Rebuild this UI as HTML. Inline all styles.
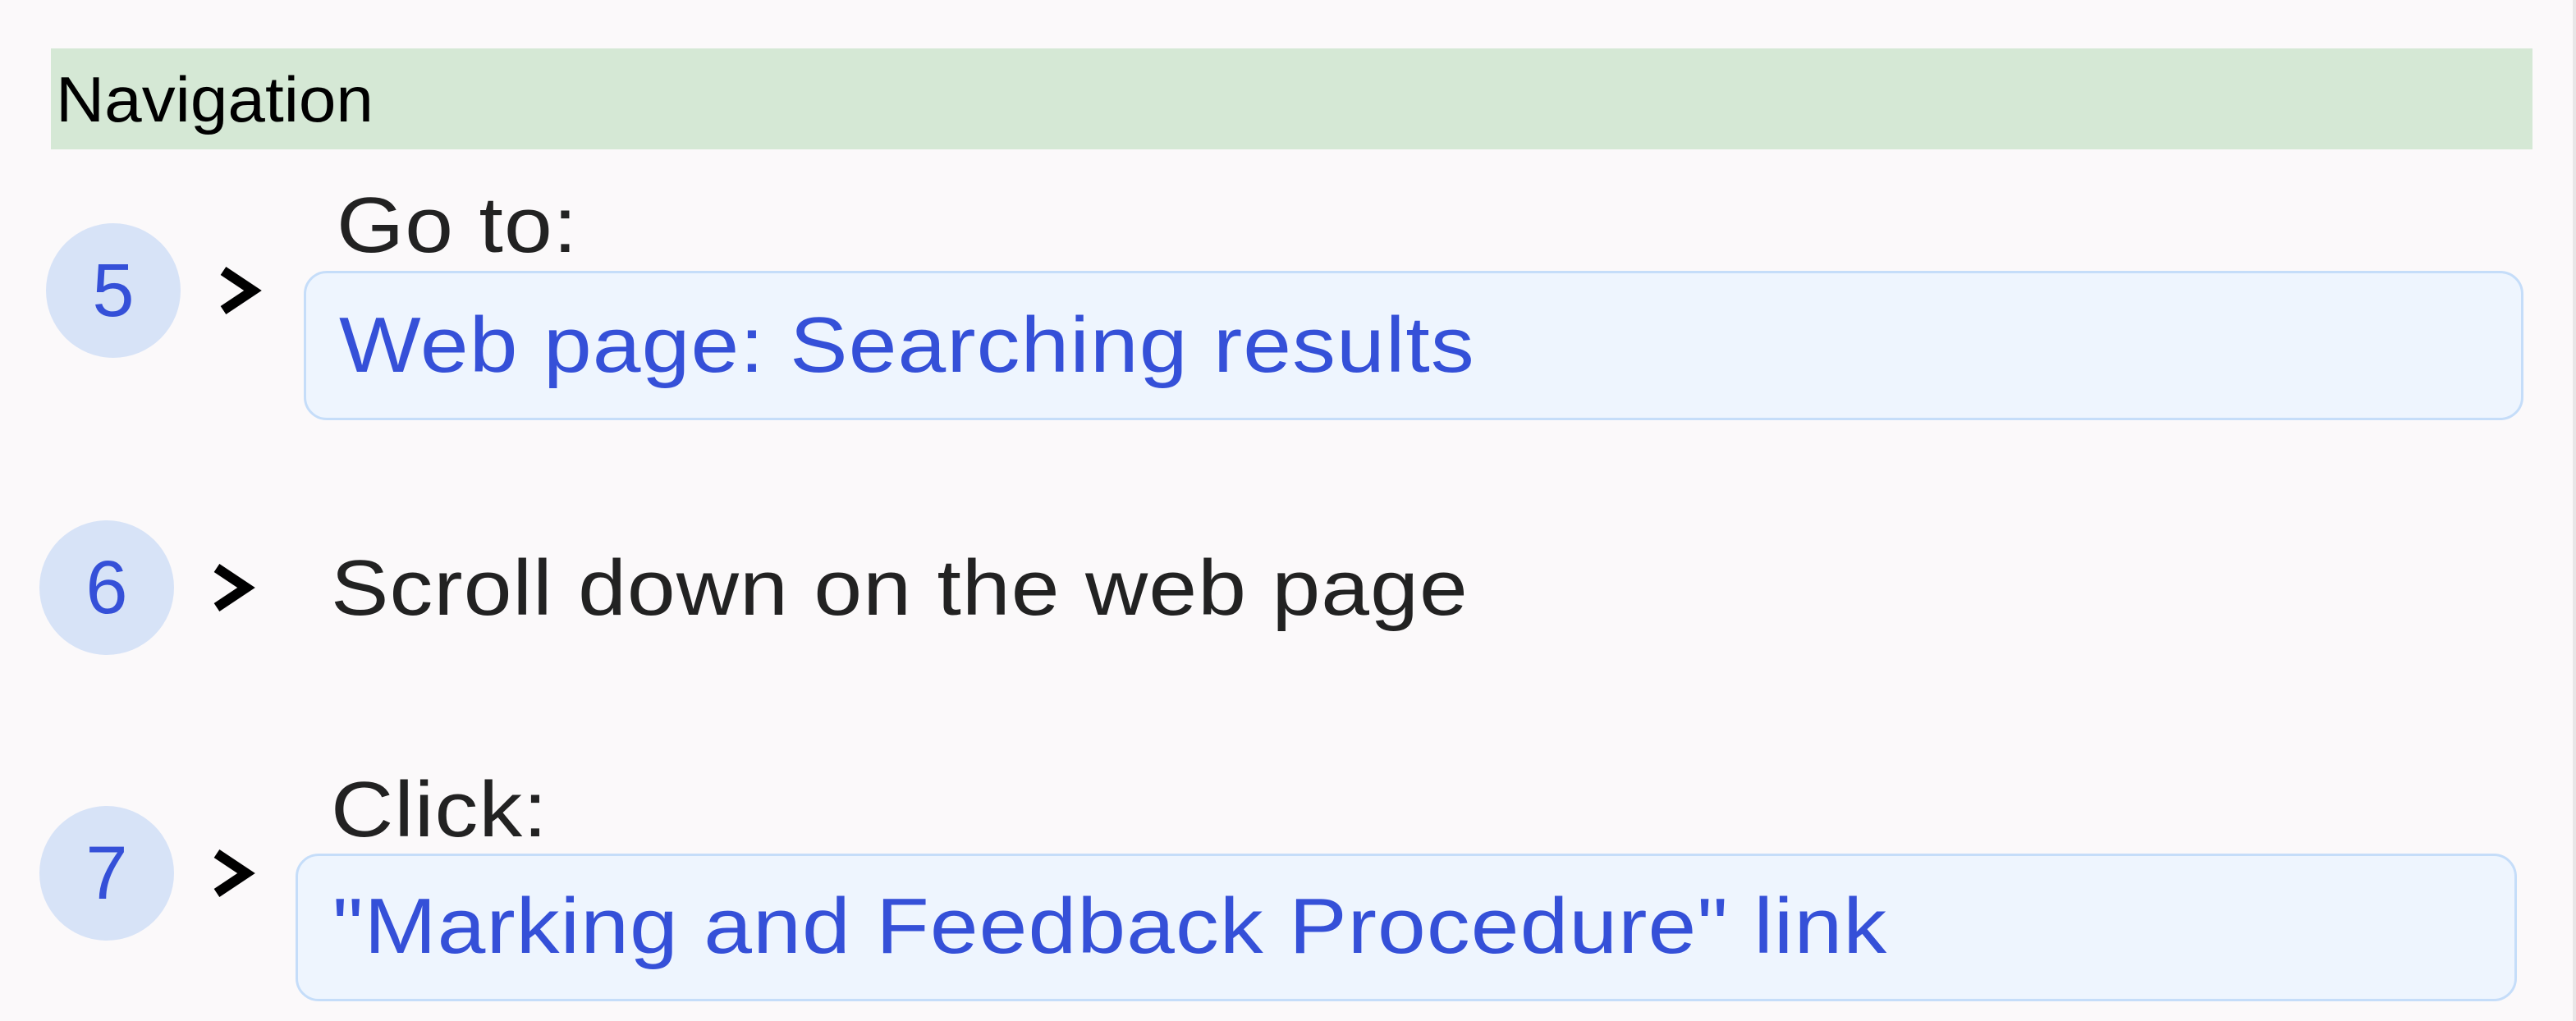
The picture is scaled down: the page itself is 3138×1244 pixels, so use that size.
<!DOCTYPE html>
<html><head><meta charset="utf-8"><style>
html,body{margin:0;padding:0}
body{width:3138px;height:1244px;background:#fbf9fa;position:relative;overflow:hidden;font-family:"Liberation Sans",sans-serif}
.a{position:absolute}
.t{position:absolute;white-space:nowrap;line-height:1;font-size:96px;letter-spacing:1px;transform:scaleX(1.10);transform-origin:0 0}
.c{position:absolute;border-radius:50%;background:#d7e3f7;color:#3550d8;font-size:92px;text-align:center}
.box{position:absolute;background:#eef5fe;border:3px solid #c5ddf9;border-radius:28px;box-sizing:border-box}
</style></head><body>
<div class="a" style="left:3134px;top:0;width:4px;height:1244px;background:#e8e6e7"></div>
<div class="a" style="left:62px;top:59px;width:3023px;height:123px;background:#d5e8d5"></div>
<div class="t" style="left:68px;top:82px;font-size:78px;letter-spacing:0;transform:scaleX(1.05);color:#000">Navigation</div>

<div class="c" style="left:56px;top:272px;width:164px;height:164px;line-height:164px">5</div>
<svg class="a" style="left:0;top:0" width="3138" height="1244">
<polyline points="272,330 308,354 272,378" fill="none" stroke="#000" stroke-width="12"/>
<polyline points="264,692 300,716 264,740" fill="none" stroke="#000" stroke-width="12"/>
<polyline points="264,1040 300,1064 264,1088" fill="none" stroke="#000" stroke-width="12"/>
</svg>
<div class="t" style="left:410px;top:227px;color:#222">Go to:</div>
<div class="box" style="left:370px;top:330px;width:2704px;height:182px"></div>
<div class="t" style="left:413px;top:373px;color:#3550d8">Web page: Searching results</div>

<div class="c" style="left:48px;top:634px;width:164px;height:164px;line-height:164px">6</div>
<div class="t" style="left:403px;top:669px;color:#222">Scroll down on the web page</div>

<div class="c" style="left:48px;top:982px;width:164px;height:164px;line-height:164px">7</div>
<div class="t" style="left:403px;top:939px;color:#222">Click:</div>
<div class="box" style="left:360px;top:1040px;width:2706px;height:180px"></div>
<div class="t" style="left:405px;top:1081px;color:#3550d8">"Marking and Feedback Procedure" link</div>
</body></html>
